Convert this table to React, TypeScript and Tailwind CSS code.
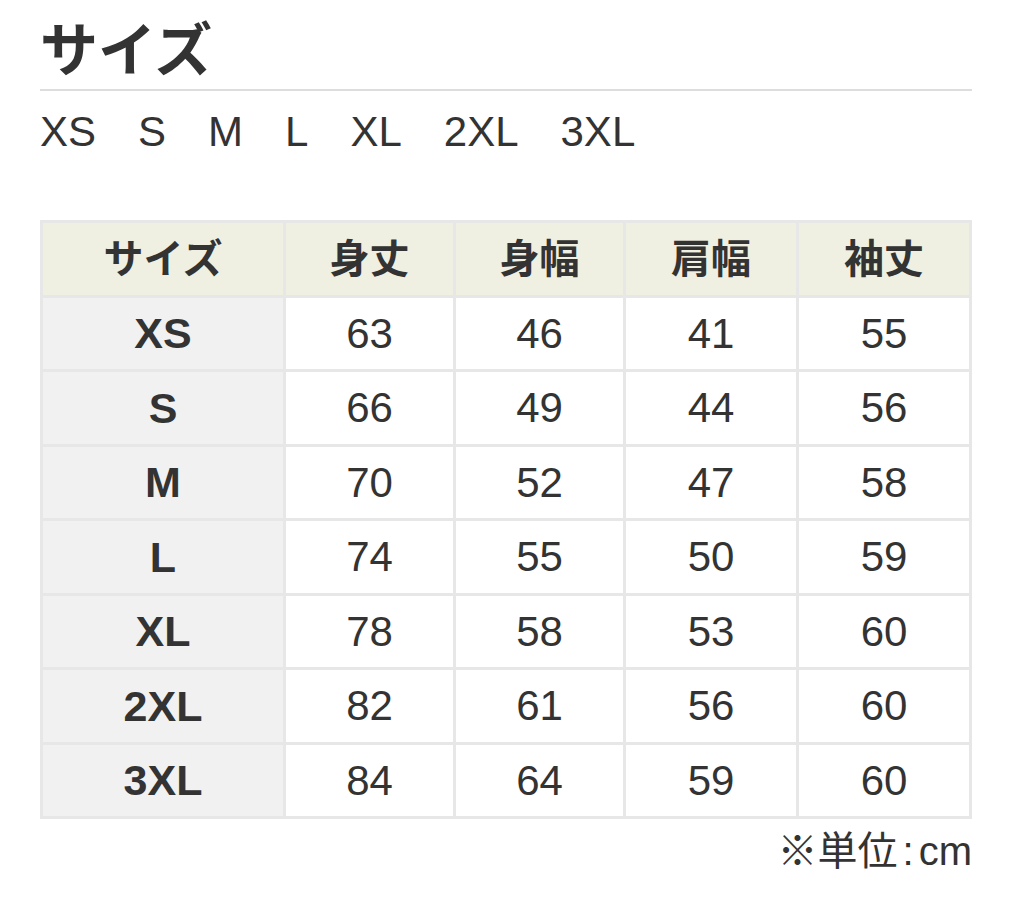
const sizes = ["XS", "S", "M", "L", "XL", "2XL", "3XL"];

const headers = ["サイズ", "身丈", "身幅", "肩幅", "袖丈"];

const rows = [
  { size: "XS", values: [63, 46, 41, 55] },
  { size: "S", values: [66, 49, 44, 56] },
  { size: "M", values: [70, 52, 47, 58] },
  { size: "L", values: [74, 55, 50, 59] },
  { size: "XL", values: [78, 58, 53, 60] },
  { size: "2XL", values: [82, 61, 56, 60] },
  { size: "3XL", values: [84, 64, 59, 60] },
];

const font = "font-['Liberation_Sans','Noto_Sans_CJK_JP',sans-serif]";

export default function App() {
  return (
    <div className={`min-h-[907px] bg-white text-[#333] ${font}`}>
      <div className="ml-10 w-[932px] pt-[22px]">
        <h1 className="border-b-2 border-[#dddddd] pb-[9px] text-[58px] font-bold leading-none">
          サイズ
        </h1>
        <ul className="mt-[20px] flex gap-[42px] text-[42px] leading-none">
          {sizes.map((s) => (
            <li key={s}>{s}</li>
          ))}
        </ul>

        <div className="mt-[67px] grid grid-cols-[240px_167px_167px_170px_170px] gap-[3px] bg-[#e7e7e7] p-[3px]">
          {headers.map((h) => (
            <div
              key={h}
              className="flex h-[71.5px] items-center justify-center bg-[#efefe2] text-[40px] font-bold"
            >
              {h}
            </div>
          ))}
          {rows.map((r) => (
            <div key={r.size} className="contents">
              <div className="flex h-[71.5px] items-center justify-center bg-[#f1f1f1] text-[43px] font-bold">
                {r.size}
              </div>
              {r.values.map((v, i) => (
                <div
                  key={i}
                  className="flex h-[71.5px] items-center justify-center bg-white text-[42px]"
                >
                  {v}
                </div>
              ))}
            </div>
          ))}
        </div>

        <p className="mt-[12px] text-right text-[40px] leading-none">
          ※単位<span className="mx-[5px]">:</span>cm
        </p>
      </div>
    </div>
  );
}
